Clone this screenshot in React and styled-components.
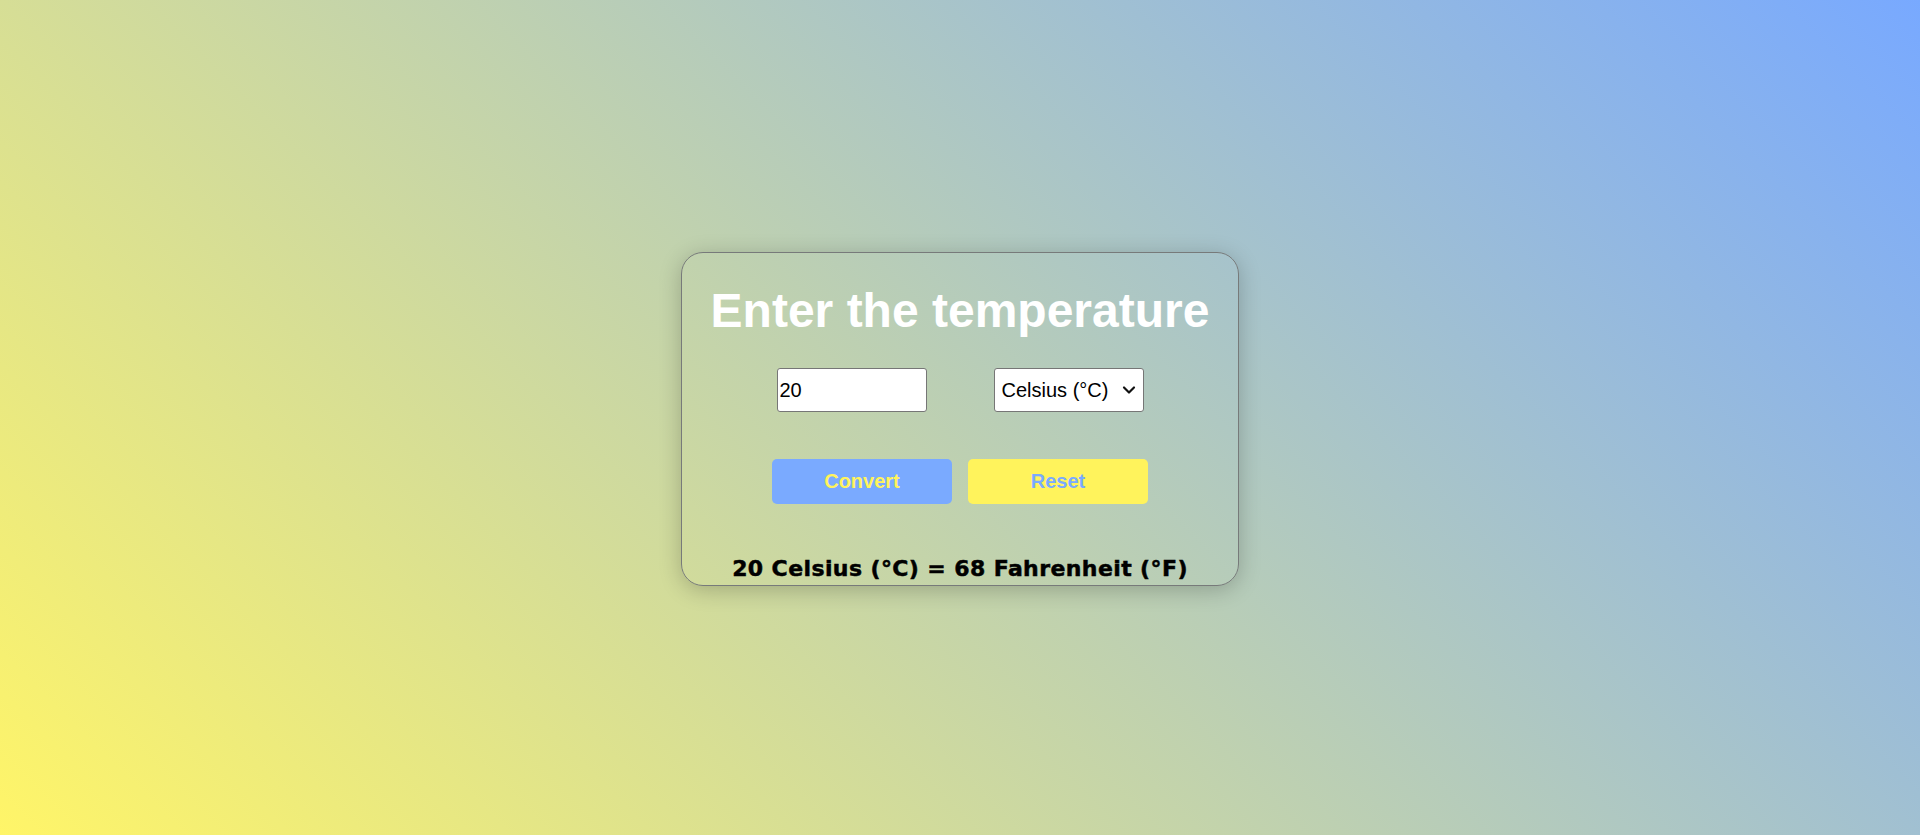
import React, { useState } from "react";
import styled, { createGlobalStyle } from "styled-components";
import { ChevronDown } from "lucide-react";

const GlobalStyle = createGlobalStyle`
  html, body {
    margin: 0;
    padding: 0;
  }
  body {
    font-family: "Liberation Sans", Arial, sans-serif;
  }
  * { box-sizing: border-box; }
`;

const Page = styled.div`
  min-height: 835px;
  padding-top: 3px;
  display: flex;
  align-items: center;
  justify-content: center;
  background: linear-gradient(45deg, #fff568 0%, #78a9ff 100%);
`;

const Card = styled.div`
  width: 558px;
  height: 334px;
  border: 1px solid #777a7a;
  border-radius: 22px;
  box-shadow: 0 4px 22px rgba(0, 0, 0, 0.22);
  display: flex;
  flex-direction: column;
  align-items: center;
`;

const Title = styled.h1`
  margin: 30px 0 0;
  font-family: "Liberation Sans", Arial, sans-serif;
  font-size: 48px;
  font-weight: 700;
  line-height: 55px;
  color: #ffffff;
  white-space: nowrap;
`;

const Row = styled.div`
  display: flex;
  justify-content: center;
  gap: ${(p) => p.$gap}px;
  margin-top: ${(p) => p.$top}px;
`;

const NumberInput = styled.input`
  width: 150px;
  height: 44px;
  padding: 1px 2px;
  border: 1px solid #767676;
  border-radius: 3px;
  background: #ffffff;
  font-family: "Liberation Sans", Arial, sans-serif;
  font-size: 20px;
  color: #000000;
  outline: none;
`;

const SelectWrap = styled.div`
  position: relative;
  width: 150px;
  height: 44px;
`;

const UnitSelect = styled.select`
  appearance: none;
  width: 100%;
  height: 100%;
  padding: 0 30px 0 7px;
  border: 1px solid #767676;
  border-radius: 3px;
  background: #ffffff;
  font-family: "Liberation Sans", Arial, sans-serif;
  font-size: 20px;
  color: #000000;
  outline: none;
`;

const Chevron = styled.span`
  position: absolute;
  right: 5px;
  top: 50%;
  transform: translateY(-50%);
  display: flex;
  pointer-events: none;
  color: #111;
`;

const Button = styled.button`
  width: 180px;
  height: 45px;
  border: none;
  border-radius: 5px;
  background: ${(p) => p.$bg};
  color: ${(p) => p.$fg};
  font-family: "Liberation Sans", Arial, sans-serif;
  font-size: 20px;
  font-weight: 700;
  cursor: pointer;
`;

const Result = styled.p`
  margin: 52px 0 0;
  font-family: "DejaVu Sans", "Liberation Sans", sans-serif;
  font-size: 22px;
  font-weight: 700;
  line-height: 26px;
  letter-spacing: 0.4px;
  -webkit-text-stroke: 0.5px #000;
  color: #000000;
  white-space: nowrap;
`;

const BLUE = "#7aaaff";
const YELLOW = "#fff35c";

export default function App() {
  const [value, setValue] = useState("20");
  const [unit, setUnit] = useState("c");

  return (
    <>
      <GlobalStyle />
      <Page>
        <Card>
          <Title>Enter the temperature</Title>
          <Row $gap={67} $top={30}>
            <NumberInput
              type="text"
              value={value}
              onChange={(e) => setValue(e.target.value)}
            />
            <SelectWrap>
              <UnitSelect value={unit} onChange={(e) => setUnit(e.target.value)}>
                <option value="c">Celsius (°C)</option>
                <option value="f">Fahrenheit (°F)</option>
              </UnitSelect>
              <Chevron>
                <ChevronDown size={20} strokeWidth={2.6} />
              </Chevron>
            </SelectWrap>
          </Row>
          <Row $gap={16} $top={47}>
            <Button $bg={BLUE} $fg={YELLOW}>Convert</Button>
            <Button $bg={YELLOW} $fg={BLUE}>Reset</Button>
          </Row>
          <Result>20 Celsius (°C) = 68 Fahrenheit (°F)</Result>
        </Card>
      </Page>
    </>
  );
}
